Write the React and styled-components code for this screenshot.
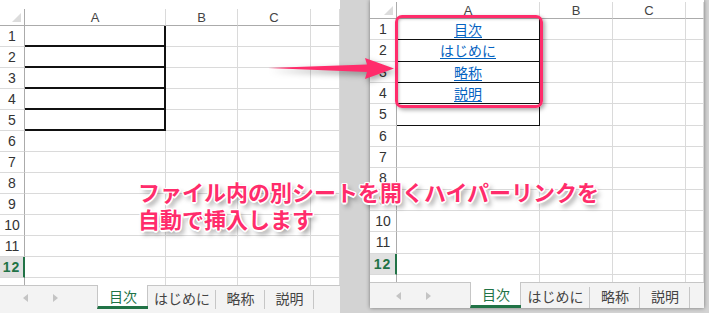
import React from 'react';
import styled, { createGlobalStyle, css } from 'styled-components';

const PINK = '#ff2c6b';
const GRID = '#dadada';
const HEAD_LINE = '#ababab';
const GREEN = '#217346';

const GlobalStyle = createGlobalStyle`
    body {
        margin: 0;
        background: #d3d3d3;
        font-family: "Noto Sans CJK JP", "Liberation Sans", sans-serif;
    }
`;

const Canvas = styled.div`
    position: relative;
    width: 709px;
    height: 313px;
    overflow: hidden;
    background: #d3d3d3;
    display: flex;
    align-items: flex-start;
    gap: 30px;
`;

const Sheet = styled.div`
    width: ${ (p) => p.$width }px;
    height: ${ (p) => p.$height }px;
    display: flex;
    flex-direction: column;
    background: #fff;
    ${ (p) => p.$shadow && css`
        box-shadow: 0 0 4px rgba(0, 0, 0, .45);
    ` }
`;

const GridArea = styled.div`
    flex: 1;
    overflow: hidden;
    padding-top: ${ (p) => p.$top }px;
`;

const Grid = styled.div`
    display: grid;
    grid-template-columns: ${ (p) => p.$cols };
    grid-template-rows: 17px;
    grid-auto-rows: ${ (p) => p.$row }px;
`;

const Corner = styled.div`
    position: relative;
    border-right: 1px solid ${ HEAD_LINE };
    border-bottom: 1px solid ${ HEAD_LINE };
    &::after {
        content: '';
        position: absolute;
        right: 3px;
        bottom: 3px;
        border-style: solid;
        border-width: 0 0 9px 9px;
        border-color: transparent transparent #dcdcdc transparent;
    }
`;

const ColHeader = styled.div`
    display: flex;
    align-items: center;
    justify-content: center;
    border-right: 1px solid ${ GRID };
    border-bottom: 1px solid ${ HEAD_LINE };
    font-family: "Liberation Sans", sans-serif;
    font-size: 13px;
    color: #444;
`;

const RowHeader = styled.div`
    display: flex;
    align-items: center;
    justify-content: center;
    border-right: 1px solid ${ HEAD_LINE };
    border-bottom: 1px solid ${ GRID };
    font-family: "Liberation Sans", sans-serif;
    font-size: 14px;
    color: #333;
    ${ (p) => p.$selected && css`
        background: #e1e1e1;
        color: ${ GREEN };
        font-weight: bold;
        letter-spacing: 1px;
        border-right: 2px solid ${ GREEN };
    ` }
`;

const Cell = styled.div`
    display: flex;
    align-items: center;
    justify-content: center;
    border-right: 1px solid ${ GRID };
    border-bottom: 1px solid ${ GRID };
    ${ (p) => p.$boxed && css`
        border-right: ${ p.$edge }px solid #111;
        border-bottom: ${ p.$edge }px solid #111;
    ` }
`;

const SheetLink = styled.a`
    font-size: 14px;
    line-height: 1;
    color: #0563c1;
    text-decoration: underline;
    text-underline-offset: 2px;
`;

const TabBar = styled.div`
    height: ${ (p) => p.$height }px;
    flex-shrink: 0;
    display: flex;
    background: #f3f3f3;
    border-top: 1px solid #c6c6c6;
    padding-bottom: ${ (p) => p.$bottom }px;
    box-sizing: border-box;
`;

const NavArea = styled.div`
    width: ${ (p) => p.$width }px;
    display: flex;
    align-items: center;
    gap: 25px;
    padding-left: ${ (p) => p.$left }px;
    box-sizing: border-box;
`;

const NavArrow = styled.span`
    width: 0;
    height: 0;
    border-style: solid;
    border-width: 4px 0 4px 0;
    border-color: transparent;
    ${ (p) => p.$dir === 'left'
        ? css`border-right: 5px solid #c4c4c4;`
        : css`border-left: 5px solid #c4c4c4;` }
`;

const Tab = styled.div`
    position: relative;
    width: ${ (p) => p.$width }px;
    display: flex;
    align-items: center;
    justify-content: center;
    font-size: 14px;
    color: #444;
    box-sizing: border-box;
    &::after {
        content: '';
        position: absolute;
        right: 0;
        top: 4px;
        bottom: 0;
        width: 1px;
        background: #c6c6c6;
    }
    ${ (p) => p.$active && css`
        margin-top: -1px;
        background: #fff;
        color: ${ GREEN };
        border-left: 1px solid #c6c6c6;
        border-bottom: 3px solid ${ GREEN };
        &::after {
            top: 0;
        }
    ` }
`;

const Highlight = styled.div`
    position: absolute;
    left: 395px;
    top: 15px;
    width: 148px;
    height: 93px;
    box-sizing: border-box;
    border: 3.5px solid ${ PINK };
    border-radius: 7px;
    box-shadow: 2px 2px 4px rgba(0, 0, 0, .35), inset 1px 1px 3px rgba(0, 0, 0, .25);
`;

const ArrowSvg = styled.svg`
    position: absolute;
    left: 0;
    top: 0;
    filter: drop-shadow(2px 3px 3px rgba(0, 0, 0, .35));
`;

const Caption = styled.div`
    position: absolute;
    left: 138px;
    top: 178px;
    font-family: "Noto Sans CJK JP", sans-serif;
    font-weight: 700;
    font-size: 22px;
    line-height: 27px;
    color: ${ PINK };
    white-space: nowrap;
    text-shadow:
        1.5px 0 0 #fff, -1.5px 0 0 #fff, 0 1.5px 0 #fff, 0 -1.5px 0 #fff,
        1px 1px 0 #fff, -1px -1px 0 #fff, 1px -1px 0 #fff, -1px 1px 0 #fff,
        3px 4px 5px rgba(0, 0, 0, .45);
`;

const COLS = [ 'A', 'B', 'C', '' ];
const LINKS = [ '目次', 'はじめに', '略称', '説明' ];
const TABS = [ '目次', 'はじめに', '略称', '説明' ];

// the 13th row only peeks out above the tab bar, so its number stays hidden
const SheetView = ({ layout, links }) => (
    <Sheet $width={layout.width} $height={layout.height} $shadow={layout.shadow}>
        <GridArea $top={layout.top}>
            <Grid $cols={layout.cols} $row={layout.row}>
                <Corner />
                {COLS.map((c, i) => <ColHeader key={`h${ i }`}>{c}</ColHeader>)}
                {Array.from({ length: 13 }, (_, r) => (
                    <React.Fragment key={r}>
                        <RowHeader $selected={r === 11}>{r < 12 ? r + 1 : ''}</RowHeader>
                        <Cell $boxed={r < 5} $edge={layout.edge}>
                            {links && links[r] && <SheetLink href="#">{links[r]}</SheetLink>}
                        </Cell>
                        <Cell />
                        <Cell />
                        <Cell />
                    </React.Fragment>
                ))}
            </Grid>
        </GridArea>
        <TabBar $height={layout.tabHeight} $bottom={layout.tabBottom}>
            <NavArea $width={layout.navWidth} $left={layout.navLeft}>
                <NavArrow $dir="left" />
                <NavArrow $dir="right" />
            </NavArea>
            {TABS.map((t, i) => (
                <Tab key={t} $active={i === 0} $width={layout.tabs[i]}>{t}</Tab>
            ))}
        </TabBar>
    </Sheet>
);

const leftLayout = {
    width: 340,
    height: 313,
    top: 9,
    cols: '25px 141px 72px 73px 29px',
    row: 21,
    edge: 2,
    tabHeight: 28,
    tabBottom: 4,
    navWidth: 97,
    navLeft: 23,
    tabs: [ 51, 68, 49, 49 ],
};

const rightLayout = {
    width: 334,
    height: 308,
    shadow: true,
    top: 2,
    cols: '27px 143px 73px 73px 18px',
    row: 21.33,
    edge: 1.5,
    tabHeight: 26,
    tabBottom: 0,
    navWidth: 100,
    navLeft: 26,
    tabs: [ 51, 69, 50, 50 ],
};

const App = () => (
    <>
        <GlobalStyle />
        <Canvas>
            <SheetView layout={leftLayout} />
            <SheetView layout={rightLayout} links={LINKS} />
            <Highlight />
            <ArrowSvg width="709" height="313" viewBox="0 0 709 313">
                <polygon
                    points="268,68 367,64.5 365,58 394,68.5 365,79 367,72"
                    fill={PINK}
                />
            </ArrowSvg>
            <Caption>
                ファイル内の別シートを開くハイパーリンクを
                <br />
                自動で挿入します
            </Caption>
        </Canvas>
    </>
);

export default App;
